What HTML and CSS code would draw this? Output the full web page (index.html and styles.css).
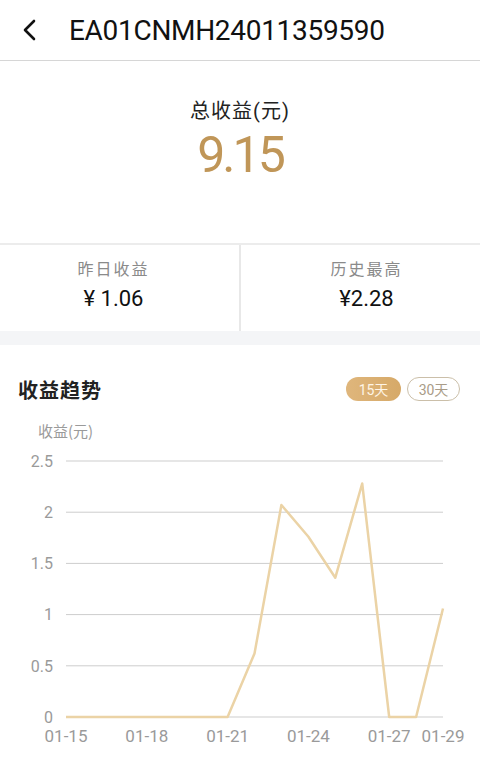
FILE: index.html
```html
<!DOCTYPE html>
<html lang="zh">
<head>
<meta charset="utf-8">
<link rel="stylesheet" href="styles.css">
</head>
<body>
<div class="page">
  <header class="topbar">
    <svg class="back" width="16" height="22" viewBox="0 0 16 22"><path d="M13 2 L4 11 L13 20" fill="none" stroke="#111" stroke-width="2.6" stroke-linecap="round" stroke-linejoin="round"/></svg>
    <div class="title">EA01CNMH24011359590</div>
  </header>

  <section class="summary">
    <div class="sum-label">总收益(元)</div>
    <div class="sum-value">9.15</div>
  </section>

  <section class="stats">
    <div class="stat stat-left">
      <div class="stat-label">昨日收益</div>
      <div class="stat-value">¥ 1.06</div>
    </div>
    <div class="divider"></div>
    <div class="stat stat-right">
      <div class="stat-label">历史最高</div>
      <div class="stat-value">¥2.28</div>
    </div>
  </section>

  <div class="gap"></div>

  <section class="trend">
    <div class="trend-head">
      <div class="trend-title">收益趋势</div>
      <div class="tabs">
        <span class="tab tab-on">15天</span>
        <span class="tab tab-off">30天</span>
      </div>
    </div>
    <svg class="chart" width="480" height="348" viewBox="0 0 480 348">
      <text class="axis-title" x="38" y="22">收益(元)</text>
      <g class="grid">
        <line x1="66" y1="46" x2="443" y2="46"/>
        <line x1="66" y1="97.2" x2="443" y2="97.2"/>
        <line x1="66" y1="148.4" x2="443" y2="148.4"/>
        <line x1="66" y1="199.6" x2="443" y2="199.6"/>
        <line x1="66" y1="250.8" x2="443" y2="250.8"/>
        <line x1="66" y1="302" x2="443" y2="302"/>
      </g>
      <g class="ytick">
        <text x="53" y="52">2.5</text>
        <text x="53" y="103">2</text>
        <text x="53" y="154">1.5</text>
        <text x="53" y="205">1</text>
        <text x="53" y="257">0.5</text>
        <text x="53" y="308">0</text>
      </g>
      <g class="xtick">
        <text x="66" y="327">01-15</text>
        <text x="146.8" y="327">01-18</text>
        <text x="227.6" y="327">01-21</text>
        <text x="308.4" y="327">01-24</text>
        <text x="389.2" y="327">01-27</text>
        <text x="443" y="327">01-29</text>
      </g>
      <polyline class="series" points="66,302 93,302 120,302 147,302 174,302 201,302 227.6,302 254.5,238.5 281.4,90 308.4,121.8 335.3,162.7 362.2,68.5 389.2,302 416.1,302 443,193.5"/>
    </svg>
  </section>
</div>
</body>
</html>
```
FILE: styles.css
```css
html, body {
  margin: 0;
  padding: 0;
  background: #ffffff;
}
body {
  font-family: Roboto, "Noto Sans CJK SC", sans-serif;
  color: #111;
}
.page {
  width: 480px;
  height: 763px;
  overflow: hidden;
  background: #fff;
}
.topbar {
  height: 60px;
  border-bottom: 1px solid #d6d6d6;
  display: flex;
  align-items: center;
  padding-left: 21px;
  box-sizing: content-box;
}
.back {
  display: block;
}
.title {
  margin-left: 32px;
  font-size: 28px;
  font-weight: 400;
  color: #111;
  letter-spacing: -0.3px;
}
.summary {
  height: 182px;
  display: flex;
  flex-direction: column;
  align-items: center;
  padding-top: 36px;
  box-sizing: border-box;
}
.sum-label {
  font-size: 20px;
  line-height: 28px;
  color: #222;
  letter-spacing: 1px;
}
.sum-value {
  font-size: 50px;
  line-height: 56px;
  font-weight: 400;
  color: #c09658;
  letter-spacing: -3px;
  margin-top: 2px;
}
.stats {
  border-top: 2px solid #ececec;
  height: 86px;
  display: grid;
  grid-template-columns: 1fr 2px 1fr;
}
.stat {
  display: flex;
  flex-direction: column;
  align-items: center;
  padding-top: 14px;
}
.stat-left {
  padding-right: 12px;
}
.stat-right {
  padding-left: 12px;
}
.divider {
  background: #e8e8e8;
}
.stat-label {
  font-size: 16px;
  line-height: 22px;
  color: #8a8a8a;
  letter-spacing: 2px;
}
.stat-value {
  font-size: 22px;
  line-height: 32px;
  color: #111;
  margin-top: 2px;
}
.gap {
  height: 14px;
  background: #f4f5f7;
}
.trend {
  background: #fff;
}
.trend-head {
  display: flex;
  align-items: center;
  justify-content: space-between;
  padding: 30px 20px 0 18px;
  height: 28px;
}
.trend-title {
  font-size: 20px;
  font-weight: 700;
  color: #222;
  letter-spacing: 1px;
}
.tabs {
  display: flex;
  gap: 6px;
}
.tab {
  display: inline-flex;
  align-items: center;
  justify-content: center;
  height: 24px;
  border-radius: 12px;
  font-size: 14px;
  box-sizing: border-box;
}
.tab-on {
  width: 55px;
  background: linear-gradient(90deg, #dfb67c, #d6a968);
  color: #fff5e6;
}
.tab-off {
  width: 53px;
  border: 1.5px solid #cbbfa9;
  color: #a99c88;
}
.chart {
  display: block;
  margin-top: 12px;
}
.axis-title {
  font-family: "Noto Sans CJK SC", sans-serif;
  font-size: 15px;
  fill: #9a9a9a;
}
.grid line {
  stroke: #cdcdcd;
  stroke-width: 1;
}
.ytick text {
  font-family: Roboto, sans-serif;
  font-size: 16px;
  fill: #9a9a9a;
  text-anchor: end;
}
.xtick text {
  font-family: Roboto, sans-serif;
  font-size: 17px;
  fill: #9a9a9a;
  text-anchor: middle;
}
.series {
  fill: none;
  stroke: #ebd3a6;
  stroke-width: 2.5;
  stroke-linejoin: round;
}
```
